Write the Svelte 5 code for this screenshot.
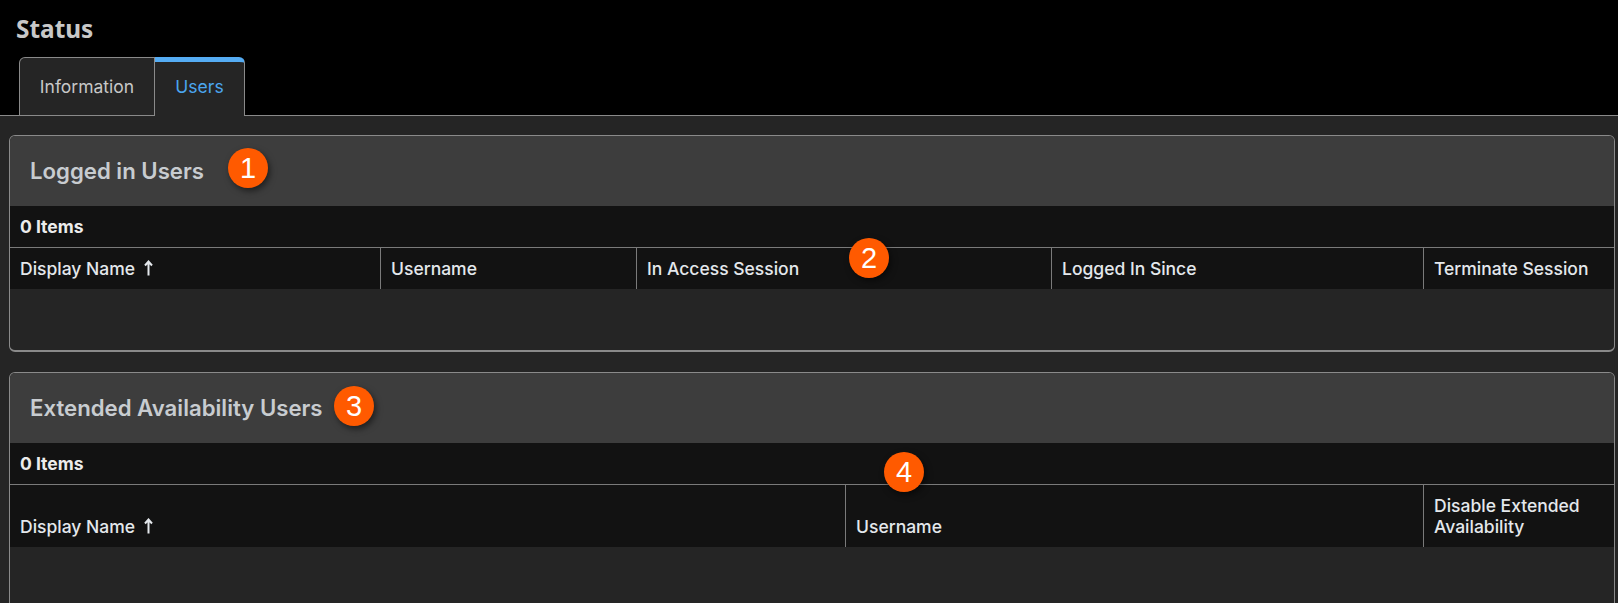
<script>
  const columnsA = [
    { label: 'Display Name', sorted: true, width: 371 },
    { label: 'Username', width: 256 },
    { label: 'In Access Session', width: 415 },
    { label: 'Logged In Since', width: 372 },
    { label: 'Terminate Session', width: 190 }
  ];
  const columnsB = [
    { label: 'Display Name', sorted: true, width: 836 },
    { label: 'Username', width: 578 },
    { label: 'Disable Extended Availability', width: 190 }
  ];
  const panels = [
    { title: 'Logged in Users', columns: columnsA, tall: false, body: 'short' },
    { title: 'Extended Availability Users', columns: columnsB, tall: true, body: 'long' }
  ];
</script>

<div class="page">
  <header class="top">
    <h1>Status</h1>
    <nav class="tabs">
      <div class="tab">Information</div>
      <div class="tab active">Users</div>
    </nav>
  </header>

  <main class="content">
    {#each panels as p}
      <section class="panel {p.body}">
        <div class="head"><h2>{p.title}</h2></div>
        <div class="count">0 Items</div>
        <div class="thead" class:tall={p.tall}>
          {#each p.columns as c}
            <div class="th" style="width:{c.width}px">
              <span>{c.label}</span>
              {#if c.sorted}
                <svg width="9" height="16" viewBox="0 0 9 16" aria-hidden="true">
                  <path d="M4.5 15.5V1.5M1 5.5l3.5-4 3.5 4" fill="none" stroke="currentColor" stroke-width="2"/>
                </svg>
              {/if}
            </div>
          {/each}
        </div>
        <div class="tbody"></div>
      </section>
    {/each}
  </main>

  <div class="badge b1">1</div>
  <div class="badge b2">2</div>
  <div class="badge b3">3</div>
  <div class="badge b4">4</div>
</div>

<style>
  :global(body) { margin: 0; background: #000; }
  .page {
    position: relative;
    width: 1618px;
    height: 603px;
    overflow: hidden;
    background: #252525;
    font-family: Inter, "Liberation Sans", sans-serif;
  }
  .top {
    background: #000;
    height: 115px;
    border-bottom: 1px solid #8a8a8a;
    box-sizing: content-box;
    position: relative;
  }
  h1 {
    margin: 0;
    padding: 12px 0 0 16px;
    height: 57px;
    box-sizing: border-box;
    font: 700 24.4px/33px "Noto Sans", sans-serif;
    color: #c8c8c8;
  }
  .tabs {
    display: flex;
    padding-left: 19px;
    height: 58px;
  }
  .tab {
    box-sizing: border-box;
    height: 58px;
    width: 136px;
    padding-top: 18px;
    text-align: center;
    background: #252525;
    border: 1px solid #8a8a8a;
    border-bottom: none;
    border-radius: 6px 0 0 0;
    color: #c8c8c8;
    font-size: 17.5px;
    line-height: 22px;
  }
  .tab.active {
    width: 90px;
    color: #4ba6ef;
    border-radius: 0 6px 0 0;
    border-left: none;
    border-right: 1px solid #8a8a8a;
    border-top: 5px solid #55acf3;
    padding-top: 14px;
    position: relative;
    z-index: 1;
    height: 59px;
  }
  .content {
    padding: 19px 3px 0 9px;
    display: flex;
    flex-direction: column;
    gap: 20px;
  }
  .panel {
    box-sizing: border-box;
    border: 1px solid #8a8a8a;
    border-radius: 6px;
    border-bottom-width: 2px;
    overflow: hidden;
    flex: none;
  }
  .panel.short { height: 217px; }
  .panel.long { height: 300px; }
  .head {
    height: 70px;
    background: #3d3d3d;
    display: flex;
    align-items: center;
    padding-left: 20px;
  }
  h2 {
    margin: 0;
    font-size: 22.2px;
    font-weight: 600;
    line-height: 26px;
    color: #c8ccd0;
  }
  .count {
    height: 42px;
    box-sizing: border-box;
    background: #121212;
    border-bottom: 1px solid #7a7a7a;
    padding: 0 0 0 10px;
    display: flex;
    align-items: center;
    font-size: 17.5px;
    font-weight: 700;
    color: #ececec;
  }
  .thead {
    display: flex;
    height: 41px;
    background: #121212;
    color: #e4e8ec;
    font-size: 17.5px;
    font-weight: 500;
  }
  .thead.tall { height: 62px; }
  .th {
    box-sizing: border-box;
    flex: none;
    padding: 0 10px 10px 10px;
    display: flex;
    align-items: flex-end;
    gap: 9px;
    line-height: 21px;
    border-right: 1px solid #7a7a7a;
  }
  .th:last-child { border-right: none; }
  .th svg { margin-bottom: 3px; }
  .badge {
    position: absolute;
    width: 40px;
    height: 40px;
    border-radius: 50%;
    background: #ff5a00;
    color: #fff;
    display: flex;
    align-items: center;
    justify-content: center;
    font: 400 29px/1 "Liberation Sans", sans-serif;
    box-shadow: 2px 3px 6px rgba(0, 0, 0, 0.5);
  }
  .b1 { left: 228px; top: 148px; }
  .b2 { left: 849px; top: 238px; }
  .b3 { left: 334px; top: 386px; }
  .b4 { left: 884px; top: 452px; }
</style>
